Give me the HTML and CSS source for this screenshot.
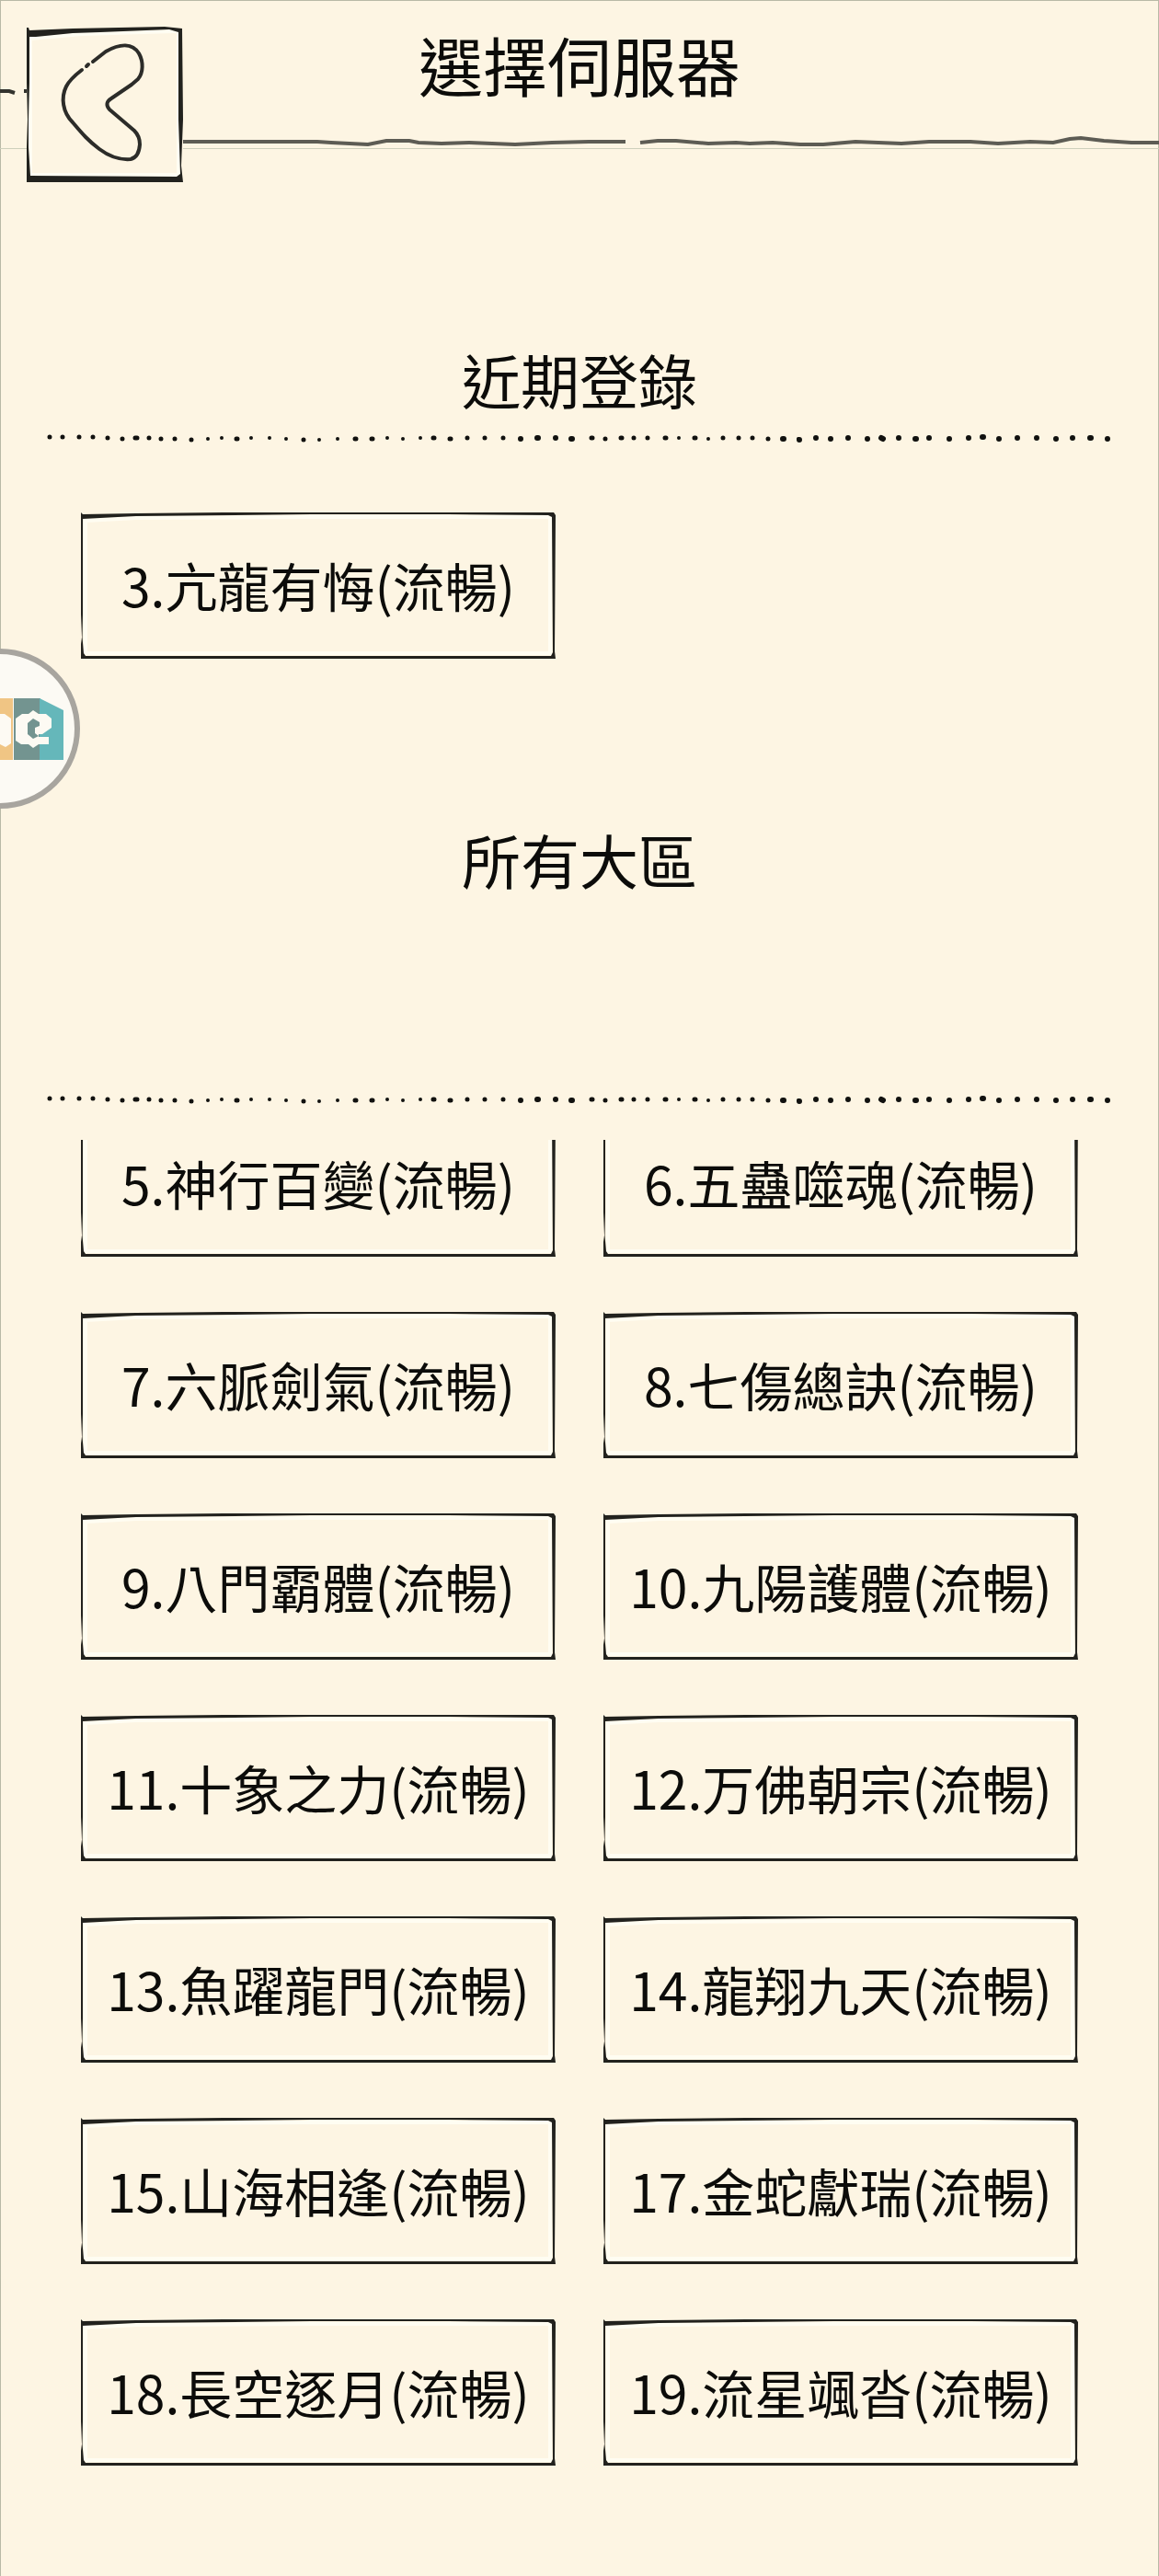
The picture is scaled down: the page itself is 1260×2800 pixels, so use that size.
FILE: index.html
```
<!DOCTYPE html>
<html lang="zh-Hant">

<head>
	<title>選擇伺服器</title>
	<meta charset="utf-8">
	<meta name="viewport" content="width=device-width, initial-scale=1">
	<link rel="stylesheet" href="styles.css">
</head>

<body>
	<!-- shared hand drawn shapes -->
	<svg class="defs" aria-hidden="true">
		<symbol id="frame" viewBox="0 0 516 158" preserveAspectRatio="none">
			<path class="glow" d="M5 153V9L60 6L250 5H510V152H5"/>
			<path class="ink" d="M0 0L2 2L60 1L250 -1H400L514 0L516 3L515 150L516 158H0V142L1 135L0 110V0ZM2 7V110L1.5 135L3 152L5 155H511L513 151L512 5L508 3L400 2L250 2L60 4L40 5Z"/>
		</symbol>
		<symbol id="dots" viewBox="0 0 1260 24">
			<path class="dot small" d="M226 13h0M241 12h0M273 12h0M293 12h0M311 13h0M347 14h0M367 13h0M421 12h0M438 13h0M457 12h0M738 12h0M770 13h0M868 13h0"/>
			<path class="dot" d="M54 11h0M68 11h0M86 11h0M101 11h0M117 12h0M133 13h0M147 12h2M162 12h0M175 13h0M190 13h0M208 14h0M257 13h1M330 14h0M386 13h1M404 13h1M471 12h1M489 13h1M508 12h0M527 12h0M547 12h0M643 12h1M658 13h0M675 12h1M689 12h0M704 12h0M723 12h1M755 12h1M786 12h0M803 12h0M818 12h0M835 13h0"/>
			<path class="dot big" d="M566 13h0M584 12h1M604 12h0M621 13h1M851 13h1M869 14h0M887 12h0M903 13h0M922 12h0M943 13h0M958 12l2 1M977 12h0M995 13h1M1010 12h0M1032 13h0M1053 12h0M1068 11h1M1086 13h0M1106 12h0M1127 12h0M1148 13h0M1166 12h0M1185 12h1M1204 13h0"/>
		</symbol>
	</svg>

	<header class="topBar">
		<svg class="topLine" viewBox="0 0 1260 162" preserveAspectRatio="none" aria-hidden="true">
			<path d="M0 99H10L16 101M26 99H30"/>
			<path class="soft" d="M198 154H345L360 155L400 157L420 153H445L455 155L480 156L510 155L560 157L600 155L640 154H680M696 155L715 153H735L770 156L800 155L815 156L840 155L870 157H895L930 154L980 156L1010 154H1055L1085 156L1120 154L1145 155L1163 151L1175 150L1200 153L1230 155H1260"/>
		</svg>
		<button class="backButton" type="button" aria-label="返回">
			<svg viewBox="0 0 170 168" aria-hidden="true">
				<path class="glow" d="M4 162V12L60 7L160 4H165V160H4"/>
				<path class="ink" d="M0 0H2L3 3L50 1L150 -1L169 1L170 100L168 150L170 168H0V130L1 100L0 60ZM3 10V60L2 100V130L4 161L163 162L167 159L165 100V5L155 2L80 5L50 6L10 10Z"/>
				<path class="arrow" d="M72 37L86 26C102 17 115 17 122 28C127 37 127 49 121 56L114 62L92 77Q84 82 90 89L117 112Q123 118 123 127Q122 141 113 143C101 144 91 141 79 132C67 123 61 116 50 103C39 92 37 76 43 64Q47 56 60 46M65 42L67 40"/>
			</svg>
		</button>
		<h1>選擇伺服器</h1>
	</header>

	<main>
		<section class="recent">
			<h2>近期登錄</h2>
			<svg class="dotted" viewBox="0 0 1260 24" aria-hidden="true"><use href="#dots"/></svg>
			<div class="servers">
				<button class="server" type="button"><svg aria-hidden="true"><use href="#frame"/></svg>3.亢龍有悔(流暢)</button>
			</div>
		</section>

		<section class="all">
			<h2>所有大區</h2>
			<svg class="dotted" viewBox="0 0 1260 24" aria-hidden="true"><use href="#dots"/></svg>
			<div class="scroller">
				<div class="servers">
					<button class="server" type="button"><svg aria-hidden="true"><use href="#frame"/></svg>5.神行百變(流暢)</button>
					<button class="server" type="button"><svg aria-hidden="true"><use href="#frame"/></svg>6.五蠱噬魂(流暢)</button>
					<button class="server" type="button"><svg aria-hidden="true"><use href="#frame"/></svg>7.六脈劍氣(流暢)</button>
					<button class="server" type="button"><svg aria-hidden="true"><use href="#frame"/></svg>8.七傷總訣(流暢)</button>
					<button class="server" type="button"><svg aria-hidden="true"><use href="#frame"/></svg>9.八門霸體(流暢)</button>
					<button class="server" type="button"><svg aria-hidden="true"><use href="#frame"/></svg>10.九陽護體(流暢)</button>
					<button class="server" type="button"><svg aria-hidden="true"><use href="#frame"/></svg>11.十象之力(流暢)</button>
					<button class="server" type="button"><svg aria-hidden="true"><use href="#frame"/></svg>12.万佛朝宗(流暢)</button>
					<button class="server" type="button"><svg aria-hidden="true"><use href="#frame"/></svg>13.魚躍龍門(流暢)</button>
					<button class="server" type="button"><svg aria-hidden="true"><use href="#frame"/></svg>14.龍翔九天(流暢)</button>
					<button class="server" type="button"><svg aria-hidden="true"><use href="#frame"/></svg>15.山海相逢(流暢)</button>
					<button class="server" type="button"><svg aria-hidden="true"><use href="#frame"/></svg>17.金蛇獻瑞(流暢)</button>
					<button class="server" type="button"><svg aria-hidden="true"><use href="#frame"/></svg>18.長空逐月(流暢)</button>
					<button class="server" type="button"><svg aria-hidden="true"><use href="#frame"/></svg>19.流星颯沓(流暢)</button>
				</div>
			</div>
		</section>
	</main>

	<!-- floating ball, half hidden behind the left edge -->
	<button class="floatBall" type="button" aria-label="懸浮球">
		<svg viewBox="-88 -88 176 176" aria-hidden="true">
			<circle r="84" fill="#fcfaf4" stroke="#a8a59f" stroke-width="6"/>
			<path fill="#f0c584" d="M-20 -33H14V34H-20Z"/>
			<path fill="#739490" d="M15 -33H44V34H15Z"/>
			<path fill="#65b7ba" d="M43 -33L69 -20V34H43Z"/>
			<path fill="#fdfaf3" d="M-10 -16H5L12 -11V16L6 20L0 17V-10Z"/>
			<path fill="#fdfaf3" d="M17 -11L24 -16H31L36 -20L42 -16H50L56 -11V-1L46 6H42V9H53V17H42L36 21L31 17H23L17 13Z"/>
			<path fill="#739490" d="M30 -6L36 -11L43 -7V-3L38 -1V5L42 8L36 11L30 6Z"/>
		</svg>
	</button>
</body>
</html>
```

FILE: styles.css
```
*{ box-sizing: border-box; }
html, body{ margin: 0; }
body{
	position: relative;
	min-height: 100vh;
	overflow-x: hidden;
	background-color: #fdf5e3;
	color: #0c0c0a;
	font-family: "Noto Sans CJK TC", sans-serif;
	box-shadow: inset 1px 1px 0 #b9b9a6, inset -1px 0 0 #b9b9a6;
}
h1, h2{ margin: 0; text-align: center; font-weight: normal; }
h1{ font-size: 70px; line-height: 80px; }
h2{ font-size: 64px; line-height: 80px; }
button{
	padding: 0;
	border: 0;
	background: none;
	color: inherit;
	font: inherit;
	cursor: pointer;
}

.defs{ position: absolute; width: 0; height: 0; }
.ink{ fill: #22221e; }
.glow{ fill: none; stroke: #fffdf2; stroke-width: 4px; }
.dot{ fill: none; stroke: #11110f; stroke-width: 5px; stroke-linecap: round; }
.small{ stroke-width: 4px; }
.big{ stroke-width: 6px; }

.topBar{
	position: relative;
	height: 162px;
	padding-top: 30px;
	border-bottom: 1px solid #ced0bb;
}
.topLine{
	position: absolute;
	top: 0; left: 0;
	width: 100%; height: 162px;
	fill: none;
	stroke: #33332e;
	stroke-width: 4px;
}
.soft{ stroke: #5d5c54; }
.backButton{
	position: absolute;
	top: 30px; left: 29px;
	width: 170px; height: 168px;
	background-color: #fdf5e3;
}
.backButton svg{ display: block; width: 100%; height: 100%; overflow: visible; }
.arrow{ fill: none; stroke: #2c2c29; stroke-width: 4px; stroke-linecap: round; stroke-linejoin: round; }

.recent{ padding-top: 209px; }
.all{ padding-top: 177px; }
.dotted{ display: block; width: 100%; margin-top: 13px; }
.all .dotted{ margin-top: 210px; }

.servers{
	display: grid;
	grid-template-columns: 1fr 1fr;
	gap: 60px 52px;
	padding: 0 88px;
}
.recent .servers{ margin-top: 69px; }
.server{
	position: relative;
	height: 159px;
	padding-bottom: 4px;
	font-size: 57px;
	line-height: 80px;
	white-space: nowrap;
}
.server svg{ position: absolute; top: 0; left: 0; width: 100%; height: 100%; }

/* the list is scrolled a little, its first row is cut off */
.scroller{ margin-top: 32px; overflow: hidden; }
.scroller .servers{ margin-top: -32px; }

.floatBall{
	position: absolute;
	top: 704px; left: -88px;
	width: 176px; height: 176px;
	border-radius: 50%;
}
.floatBall svg{ display: block; width: 100%; height: 100%; }
```
